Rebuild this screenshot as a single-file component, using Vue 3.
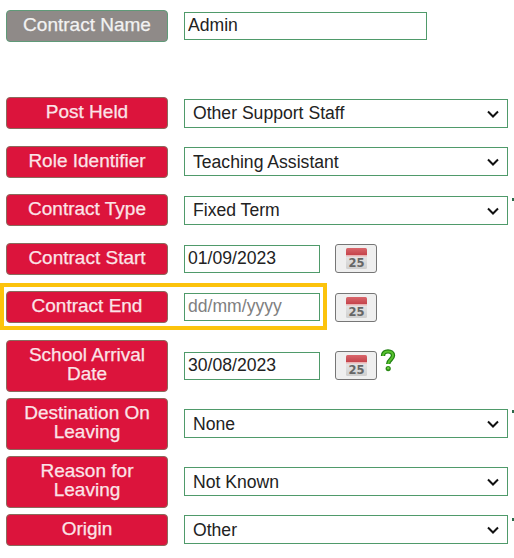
<script setup>
// each dropdown only shows its current value in the picture
const chevron = "M1 1.5 L6 6.5 L11 1.5";
</script>

<template>
  <div class="form">
    <svg class="defs" width="0" height="0">
      <defs>
        <linearGradient id="calHead" x1="0" y1="0" x2="0" y2="1">
          <stop offset="0" stop-color="#d9666b" />
          <stop offset="1" stop-color="#c23f47" />
        </linearGradient>
        <linearGradient id="calBody" x1="0" y1="0" x2="0" y2="1">
          <stop offset="0" stop-color="#f2f2f2" />
          <stop offset="1" stop-color="#cfcfcf" />
        </linearGradient>
        <symbol id="cal" viewBox="0 0 21 21">
          <rect x="0" y="0" width="21" height="21" rx="1.5" fill="url(#calBody)" />
          <rect x="0" y="0" width="21" height="8" rx="1.5" fill="url(#calHead)" />
          <rect x="0" y="7" width="21" height="1.5" fill="#eab4b4" />
          <text x="10.5" y="19" class="cal-num">25</text>
        </symbol>
      </defs>
    </svg>

    <div class="row first">
      <div class="label grey">Contract Name</div>
      <input class="text-input name-input" type="text" value="Admin" />
    </div>

    <div class="row">
      <div class="label">Post Held</div>
      <div class="picker-wrap">
        <select class="picker"><option>Other Support Staff</option></select>
        <svg class="chevron" width="12" height="8" viewBox="0 0 12 8"><path :d="chevron" /></svg>
      </div>
    </div>
    <div class="row">
      <div class="label">Role Identifier</div>
      <div class="picker-wrap">
        <select class="picker"><option>Teaching Assistant</option></select>
        <svg class="chevron" width="12" height="8" viewBox="0 0 12 8"><path :d="chevron" /></svg>
      </div>
    </div>
    <div class="row">
      <div class="label">Contract Type</div>
      <div class="picker-wrap">
        <select class="picker"><option>Fixed Term</option></select>
        <svg class="chevron" width="12" height="8" viewBox="0 0 12 8"><path :d="chevron" /></svg>
      </div>
      <span class="tick"></span>
    </div>
    <div class="row">
      <div class="label">Contract Start</div>
      <input class="text-input date-input" type="text" value="01/09/2023" />
      <button class="cal-btn" type="button">
        <svg width="21" height="21"><use href="#cal" /></svg>
      </button>
    </div>
    <div class="row highlighted">
      <div class="label">Contract End</div>
      <input class="text-input date-input" type="text" placeholder="dd/mm/yyyy" />
      <button class="cal-btn" type="button">
        <svg width="21" height="21"><use href="#cal" /></svg>
      </button>
    </div>
    <div class="row tall">
      <div class="label">School Arrival Date</div>
      <input class="text-input date-input" type="text" value="30/08/2023" />
      <button class="cal-btn" type="button">
        <svg width="21" height="21"><use href="#cal" /></svg>
      </button>
      <svg class="help" width="16" height="23" viewBox="0 0 16 23">
        <path class="q-out" d="M3 7C3 3.8 5.2 2.4 8 2.4s5 1.5 5 4.2c0 3.8-4.8 4.2-4.8 8.4" />
        <path class="q-in" d="M3 7C3 3.8 5.2 2.4 8 2.4s5 1.5 5 4.2c0 3.8-4.8 4.2-4.8 8.4" />
        <circle cx="8.2" cy="19.6" r="2.6" fill="#2b8a17" />
        <circle cx="8.2" cy="19.2" r="1.2" fill="#6fcf3f" />
      </svg>
    </div>
    <div class="row tall">
      <div class="label">Destination On Leaving</div>
      <div class="picker-wrap">
        <select class="picker"><option>None</option></select>
        <svg class="chevron" width="12" height="8" viewBox="0 0 12 8"><path :d="chevron" /></svg>
      </div>
      <span class="tick low"></span>
    </div>
    <div class="row tall">
      <div class="label">Reason for Leaving</div>
      <div class="picker-wrap">
        <select class="picker"><option>Not Known</option></select>
        <svg class="chevron" width="12" height="8" viewBox="0 0 12 8"><path :d="chevron" /></svg>
      </div>
    </div>
    <div class="row">
      <div class="label">Origin</div>
      <div class="picker-wrap">
        <select class="picker"><option>Other</option></select>
        <svg class="chevron" width="12" height="8" viewBox="0 0 12 8"><path :d="chevron" /></svg>
      </div>
      <span class="tick"></span>
    </div>
  </div>
</template>

<style scoped>
.form {
  position: relative;
  width: 514px;
  height: 558px;
  padding: 10px 0 0 6px;
  box-sizing: border-box;
  overflow: hidden;
  font-family: "Liberation Sans", Arial, sans-serif;
}
.defs {
  position: absolute;
}
.row {
  position: relative;
  display: flex;
  align-items: center;
  height: 32px;
  margin-bottom: 16.5px;
}
.row.first {
  margin-bottom: 55px;
}
.row.tall {
  height: 52px;
  margin-bottom: 6px;
}
.label {
  flex: none;
  box-sizing: border-box;
  width: 162px;
  height: 100%;
  margin-right: 16px;
  padding: 0 6px 3px;
  display: flex;
  align-items: center;
  justify-content: center;
  text-align: center;
  line-height: 19px;
  font-size: 19px;
  color: #fbe4e8;
  -webkit-text-stroke: 0.25px #fbe4e8;
  background: #dc143c;
  border: 1px solid #8a6a5c;
  border-radius: 4px;
}
.label.grey {
  background: #8f8a88;
  border-color: #5f9a78;
  color: #f2f2f2;
  -webkit-text-stroke-color: #f2f2f2;
}
.text-input,
.picker {
  box-sizing: border-box;
  height: 29px;
  border: 1px solid #4f9a6a;
  border-radius: 0;
  background: #fff;
  font-family: inherit;
  font-size: 17.6px;
  color: #222;
  outline: none;
}
.text-input {
  padding: 0 3px 1px;
}
.text-input::placeholder {
  color: #808080;
}
.name-input,
.date-input {
  height: 28px;
}
.name-input {
  width: 243px;
}
.date-input {
  width: 136px;
}
.picker-wrap {
  position: relative;
  width: 324px;
  height: 29px;
}
.picker {
  display: block;
  width: 100%;
  padding: 0 4px 0 8px;
  appearance: none;
}
.chevron {
  position: absolute;
  right: 9px;
  top: 11px;
  pointer-events: none;
}
.chevron path {
  fill: none;
  stroke: #111;
  stroke-width: 2;
}
.cal-btn {
  box-sizing: border-box;
  flex: none;
  width: 42px;
  height: 29px;
  margin-left: 15px;
  padding: 0;
  display: flex;
  align-items: center;
  justify-content: center;
  background: #efefef;
  border: 1px solid #767676;
  border-radius: 3px;
}
.cal-num {
  font-family: "DejaVu Sans", sans-serif;
  font-size: 11.5px;
  font-weight: bold;
  text-anchor: middle;
  fill: #666;
}
.help {
  position: absolute;
  left: 374px;
  top: 9px;
}
.q-out,
.q-in {
  fill: none;
}
.q-out {
  stroke: #1f7f12;
  stroke-width: 4.4;
}
.q-in {
  stroke: #58c22e;
  stroke-width: 2;
}
.tick {
  position: absolute;
  left: 506px;
  top: 4px;
  width: 2px;
  height: 3px;
  background: #2c6a4a;
}
.tick.low {
  top: 12px;
}
.highlighted::after {
  content: "";
  position: absolute;
  left: -6px;
  top: -8px;
  width: 327px;
  height: 47px;
  box-sizing: border-box;
  border: 4px solid #fcc30c;
  pointer-events: none;
}
</style>
